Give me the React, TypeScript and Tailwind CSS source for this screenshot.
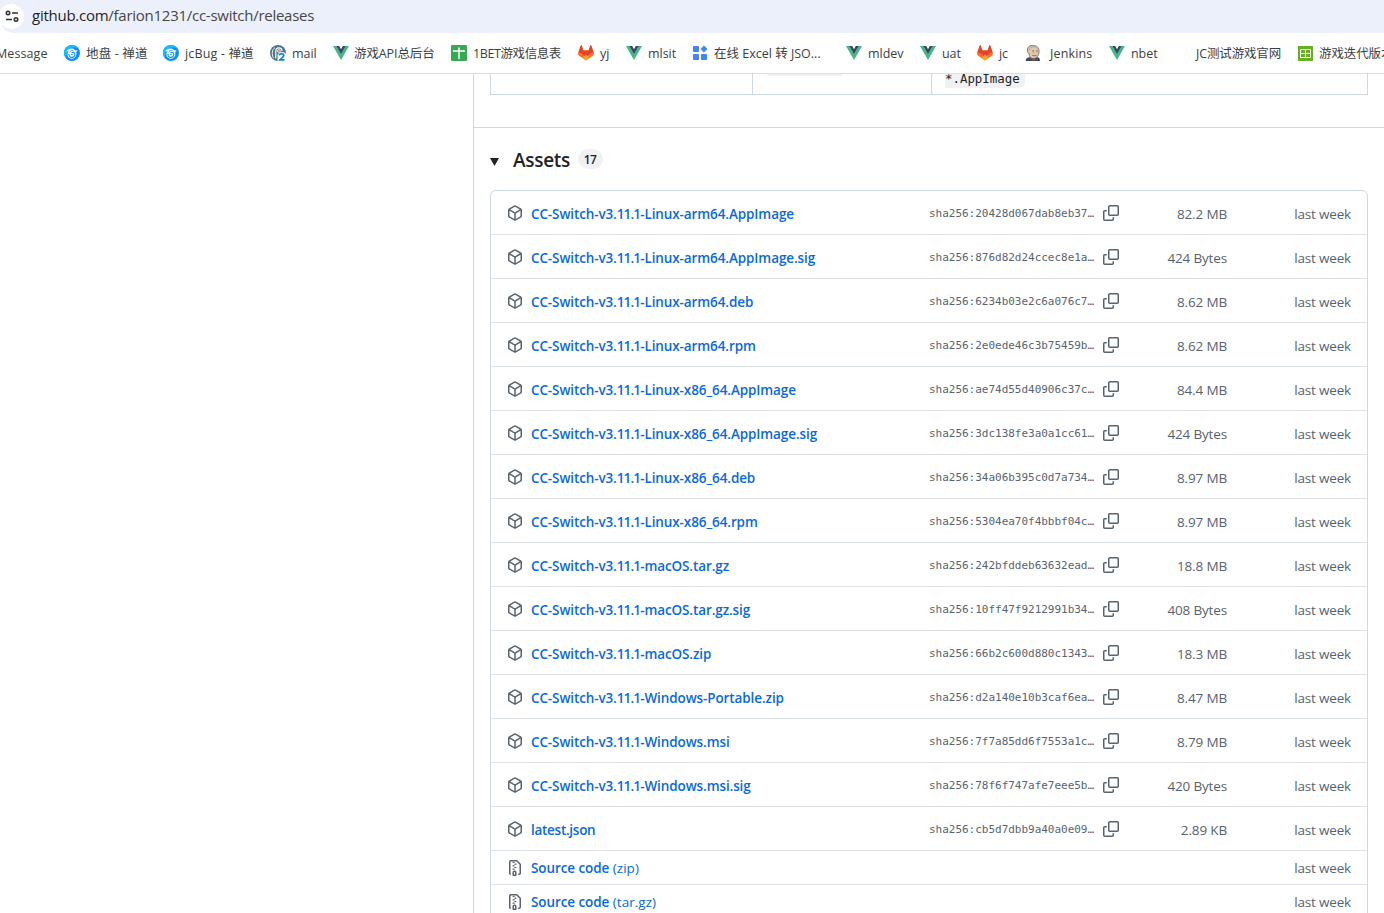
import React from "react";

const assets: [string, string, string][] = [
  ["Linux-arm64.AppImage", "sha256:20428d067dab8eb37…", "82.2 MB"],
  ["Linux-arm64.AppImage.sig", "sha256:876d82d24ccec8e1a…", "424 Bytes"],
  ["Linux-arm64.deb", "sha256:6234b03e2c6a076c7…", "8.62 MB"],
  ["Linux-arm64.rpm", "sha256:2e0ede46c3b75459b…", "8.62 MB"],
  ["Linux-x86_64.AppImage", "sha256:ae74d55d40906c37c…", "84.4 MB"],
  ["Linux-x86_64.AppImage.sig", "sha256:3dc138fe3a0a1cc61…", "424 Bytes"],
  ["Linux-x86_64.deb", "sha256:34a06b395c0d7a734…", "8.97 MB"],
  ["Linux-x86_64.rpm", "sha256:5304ea70f4bbbf04c…", "8.97 MB"],
  ["macOS.tar.gz", "sha256:242bfddeb63632ead…", "18.8 MB"],
  ["macOS.tar.gz.sig", "sha256:10ff47f9212991b34…", "408 Bytes"],
  ["macOS.zip", "sha256:66b2c600d880c1343…", "18.3 MB"],
  ["Windows-Portable.zip", "sha256:d2a140e10b3caf6ea…", "8.47 MB"],
  ["Windows.msi", "sha256:7f7a85dd6f7553a1c…", "8.79 MB"],
  ["Windows.msi.sig", "sha256:78f6f747afe7eee5b…", "420 Bytes"],
  ["latest.json", "sha256:cb5d7dbb9a40a0e09…", "2.89 KB"],
];

const PackageIcon = () => (
  <svg className="block size-4 shrink-0" viewBox="0 0 16 16" fill="#59636e">
    <path d="m8.878.392 5.25 3.045c.54.314.872.89.872 1.514v6.098a1.75 1.75 0 0 1-.872 1.514l-5.25 3.045a1.75 1.75 0 0 1-1.756 0l-5.25-3.045A1.75 1.75 0 0 1 1 11.049V4.951c0-.624.332-1.201.872-1.514L7.122.392a1.75 1.75 0 0 1 1.756 0ZM7.875 1.69l-4.63 2.685L8 7.133l4.755-2.758-4.63-2.685a.248.248 0 0 0-.25 0ZM2.5 5.677v5.372c0 .09.047.171.125.216l4.625 2.683V8.432Zm6.25 8.271 4.625-2.683a.25.25 0 0 0 .125-.216V5.677L8.75 8.432Z" />
  </svg>
);

const CopyIcon = () => (
  <svg className="block size-4 shrink-0" viewBox="0 0 16 16" fill="#59636e">
    <path d="M0 6.75C0 5.784.784 5 1.75 5h1.5a.75.75 0 0 1 0 1.5h-1.5a.25.25 0 0 0-.25.25v7.5c0 .138.112.25.25.25h7.5a.25.25 0 0 0 .25-.25v-1.5a.75.75 0 0 1 1.5 0v1.5A1.75 1.75 0 0 1 9.25 16h-7.5A1.75 1.75 0 0 1 0 14.25Z" />
    <path d="M5 1.75C5 .784 5.784 0 6.75 0h7.5C15.216 0 16 .784 16 1.75v7.5A1.75 1.75 0 0 1 14.25 11h-7.5A1.75 1.75 0 0 1 5 9.25Zm1.75-.25a.25.25 0 0 0-.25.25v7.5c0 .138.112.25.25.25h7.5a.25.25 0 0 0 .25-.25v-7.5a.25.25 0 0 0-.25-.25Z" />
  </svg>
);

const ZipIcon = () => (
  <svg className="block size-4 shrink-0" viewBox="0 0 16 16" fill="#59636e">
    <path d="M3.5 1.75v11.5c0 .09.048.173.126.217a.75.75 0 0 1-.752 1.298A1.748 1.748 0 0 1 2 13.25V1.75C2 .784 2.784 0 3.75 0h5.586c.464 0 .909.185 1.237.513l2.914 2.914c.329.328.513.773.513 1.237v8.586A1.75 1.75 0 0 1 12.25 15h-.5a.75.75 0 0 1 0-1.5h.5a.25.25 0 0 0 .25-.25V4.664a.25.25 0 0 0-.073-.177L9.513 1.573a.25.25 0 0 0-.177-.073H3.75a.25.25 0 0 0-.25.25Zm3.75 8.75h.5c.966 0 1.75.784 1.75 1.75v3a.75.75 0 0 1-.75.75h-2.5a.75.75 0 0 1-.75-.75v-3c0-.966.784-1.75 1.75-1.75ZM7 12.25v2.25h1v-2.25a.25.25 0 0 0-.25-.25h-.5a.25.25 0 0 0-.25.25Z" />
    <path d="M6 1.9h1.2a.55.55 0 0 1 0 1.1H6a.55.55 0 0 1 0-1.1ZM7.8 3.6H9a.55.55 0 0 1 0 1.1H7.8a.55.55 0 0 1 0-1.1ZM6 5.3h1.2a.55.55 0 0 1 0 1.1H6a.55.55 0 0 1 0-1.1ZM7.8 7H9a.55.55 0 0 1 0 1.1H7.8a.55.55 0 0 1 0-1.1ZM6 8.6h1.2a.55.55 0 0 1 0 1.1H6a.55.55 0 0 1 0-1.1Z" />
  </svg>
);

const VueIcon = () => (
  <svg className="block size-4" viewBox="0 0 16 16">
    <path d="M0 1h3.2L8 9.3 12.8 1H16L8 14.9Z" fill="#41b883" />
    <path d="M3.2 1h3L8 4.2 9.8 1h3L8 9.3Z" fill="#35495e" />
  </svg>
);

const SwirlIcon = () => (
  <svg className="block size-4" viewBox="0 0 16 16">
    <circle cx="8" cy="8" r="8" fill="#0a8ff8" />
    <path d="M0 8A8 8 0 0 1 14.9 4C11 1.4 4 2.4 3 7.6L1.8 13A8 8 0 0 1 0 8Z" fill="#12bffb" />
    <path d="M2.2 6.2C5 2.6 9.3 3 11.2 5.2L13.8 5.4C12.9 6 12.4 6.6 12.2 7.6 13 11 10.8 13.7 7.8 13.7 4.4 13.7 2.8 10.6 3.8 7.6L4.6 6.2Z" fill="white" />
    <path d="M5 9.4C4.9 11.2 6.2 12.4 7.8 12.4c2 0 3.3-1.6 3-3.4C10.5 7.6 9 7 7.9 7.7" fill="none" stroke="#0a8ff8" strokeWidth="1.1" strokeLinecap="round" />
    <path d="M5.3 7.4C6 5.8 8 5.2 9.6 5.8" fill="none" stroke="#0a9ff9" strokeWidth=".8" />
    <circle cx="7.9" cy="9.5" r=".8" fill="#0a8ff8" />
  </svg>
);

const MailIcon = () => (
  <svg className="block size-4" viewBox="0 0 16 16">
    <circle cx="8" cy="8" r="8" fill="#4c7587" />
    <path d="M3.6 13.2C1.4 9 2 4.4 5 2.6" fill="none" stroke="white" strokeWidth=".9" />
    <path d="M5.8 13.4V6C5.8 1.8 12 1.8 12 6" fill="none" stroke="white" strokeWidth="1.2" />
    <circle cx="8.9" cy="6" r="1.4" fill="none" stroke="white" strokeWidth=".9" />
    <path d="M7.6 9.4 10 7.2h4l2 1.6V16H7.6Z" fill="white" />
    <path d="M9.2 10.4c.4-2 4.6-1.9 4.6.2 0 1.4-2.5 2.4-3.8 4.2h4.6" fill="none" stroke="#1586c4" strokeWidth="1.7" />
  </svg>
);

const SheetIcon = () => (
  <svg className="block size-4" viewBox="0 0 16 16">
    <rect width="16" height="16" rx="1.2" fill="#35aa53" />
    <path d="M2 6h12M8 2.5V14" stroke="white" strokeWidth="1.5" />
  </svg>
);

const GitlabIcon = () => (
  <svg className="block size-4" viewBox="0 0 16 16">
    <path d="M8 15.6.9 10.4C.1 9.8-.1 8.9.2 8L2.7.7c.2-.5.8-.5 1 0L5.4 5.6h5.2L12.3.7c.2-.5.8-.5 1 0L15.8 8c.3.9.1 1.8-.7 2.4Z" fill="#fc6d26" />
    <path d="M.3 7.6 2.7.7c.2-.5.8-.5 1 0l1.7 4.9h5.2L12.3.7c.2-.5.8-.5 1 0l2.4 6.9c-1.7-.1-2.8.5-3.8 1.3L8 11.8 4.1 8.9C3.1 8.1 2 7.5.3 7.6Z" fill="#e24329" />
    <path d="m4.1 12.7 3.9-2.9 3.9 2.9L8 15.6Z" fill="#fca326" />
  </svg>
);

const AppsIcon = () => (
  <svg className="block size-4" viewBox="0 0 16 16" fill="#4285f4">
    <rect x="1" y="1" width="6" height="6" rx=".7" />
    <rect x="1" y="9" width="6" height="6" rx=".7" />
    <rect x="9" y="9" width="6" height="6" rx=".7" />
    <path d="m12 .5 3.5 3.5L12 7.5 8.5 4Z" />
  </svg>
);

const JenkinsIcon = () => (
  <svg className="block size-4" viewBox="0 0 16 16">
    <path d="M.5 16c.3-2.2 1.7-3.5 4-3.7L8 13l5-.7c1.3.6 2 1.8 2 3.7Z" fill="#335061" />
    <path d="M2.4 5.2C2.4 1.6 5 .4 8.2.4c4 0 6.2 2.7 5.8 6.6-.3 3.8-2.6 6.7-5.6 6.7-3 0-4.3-2.6-4.3-5.1-1.2-.2-1.8-1.7-1.7-3.4Z" fill="#e3c8ab" stroke="#514b47" strokeWidth=".7" />
    <path d="M2.8 5.2c1.2-.4 1.3-2 2.1-3.2C8 0 12.8.3 13.6 4.8 11.4 2.2 8.4 2 5.6 3.3L4.6 6Z" fill="#b8b6b0" />
    <path d="M7.5 5.8h1.4m2.3 0h1.3M7.8 7h.7m3 0h.6M7.3 10.3c1.4.6 2.8.6 4.2 0" stroke="#5b4d42" strokeWidth=".8" fill="none" />
    <path d="m6.7 13.2 2.2 1 2.4-1v2.6l-2.4-.8-2.2.8Z" fill="#d33833" />
  </svg>
);

const GridIcon = () => (
  <svg className="block size-4" viewBox="0 0 16 16">
    <rect x="0" y="1" width="15" height="15" fill="#66b120" />
    <path d="M2.5 4.5h10v8h-10ZM7.5 4.5v8M2.5 8.5h10" fill="none" stroke="white" strokeWidth="1" />
  </svg>
);

type Mark = { icon?: React.ReactNode; label: string; width: string; gap?: string; track?: string };
const marks: Mark[] = [
  { icon: <SwirlIcon />, label: "地盘 - 禅道", width: "w-[99px]", track: "tracking-[0.15px]" },
  { icon: <SwirlIcon />, label: "jcBug - 禅道", width: "w-[107px]", track: "tracking-[0.15px]" },
  { icon: <MailIcon />, label: "mail", width: "w-[63px]" },
  { icon: <VueIcon />, label: "游戏API总后台", width: "w-[118px]", gap: "gap-[5px]", track: "tracking-[-0.1px]" },
  { icon: <SheetIcon />, label: "1BET游戏信息表", width: "w-[127px]", track: "tracking-[-0.4px]" },
  { icon: <GitlabIcon />, label: "yj", width: "w-[48px]" },
  { icon: <VueIcon />, label: "mlsit", width: "w-[66px]" },
  { icon: <AppsIcon />, label: "在线 Excel 转 JSO...", width: "w-[154px]", track: "tracking-[0px]" },
  { icon: <VueIcon />, label: "mldev", width: "w-[74px]" },
  { icon: <VueIcon />, label: "uat", width: "w-[57px]" },
  { icon: <GitlabIcon />, label: "jc", width: "w-[48px]" },
  { icon: <JenkinsIcon />, label: "Jenkins", width: "w-[84px]", gap: "gap-[9px]", track: "tracking-[0.15px]" },
  { icon: <VueIcon />, label: "nbet", width: "w-[65px]" },
  { label: "JC测试游戏官网", width: "w-[124px]", track: "tracking-[-0.15px]" },
  { icon: <GridIcon />, label: "游戏迭代版本", width: "w-[110px]", gap: "gap-[5px]", track: "tracking-[-0.1px]" },
];

function Browser() {
  return (
    <header className="h-[74px] shrink-0 border-b border-[#dddfe1] bg-white">
      <div className="flex h-[33px] items-start rounded-bl-[14px] bg-[#ebf0fa]">
        <div className="ml-[-1px] flex h-8 w-[25px] items-center justify-center">
          <div className="flex size-[25px] shrink-0 items-center justify-center rounded-full bg-white">
            <svg className="block size-[14px]" viewBox="0 0 14 14" fill="none" stroke="#303134" strokeWidth="1.6">
              <circle cx="3" cy="4" r="1.7" />
              <path d="M7 4h6M1 10.5h6" />
              <circle cx="11" cy="10.5" r="1.7" />
            </svg>
          </div>
        </div>
        <div className="ml-2 mt-[5px] whitespace-nowrap text-[15px] leading-5 tracking-[-0.26px] text-[#474747]">
          <span className="text-[#1f1f1f]">github.com</span>/farion1231/cc-switch/releases
        </div>
      </div>
      <nav className="flex h-10 items-center whitespace-nowrap text-[12.5px] text-[#3c4043]">
        <div className="flex w-16 shrink-0">
          <span className="-ml-[4px] mt-[2px] tracking-[0.1px]">Message</span>
        </div>
        {marks.map((m, i) => (
          <div key={i} className={`flex shrink-0 items-center ${m.width} ${m.gap ?? "gap-[6px]"}`}>
            <div className="size-4 shrink-0">{m.icon}</div>
            <span className={`mt-[2px] ${m.track ?? "tracking-[-0.05px]"}`}>{m.label}</span>
          </div>
        ))}
      </nav>
    </header>
  );
}

export default function App() {
  return (
    <div className="flex h-[913px] w-[1384px] flex-col overflow-hidden bg-white font-['Open_Sans','Noto_Sans_CJK_SC',sans-serif] text-[#1f2328]">
      <Browser />
      <main className="ml-[473px] flex min-h-0 flex-1 flex-col overflow-hidden border-l border-[#d1d9e0]">
        <div className="flex h-[54px] shrink-0 items-start border-b border-[#d1d9e0] pl-4">
          <div className="flex h-[21px] w-[878px] border-x border-b border-[#d1d9e0]">
            <div className="w-[262px] border-r border-[#d1d9e0]" />
            <div className="w-[179px] border-r border-[#d1d9e0] pl-[14px]">
              <div className="h-0.5 w-[76px] rounded-b-md bg-[#eff1f3]" />
            </div>
            <div className="pl-[13px]">
              <div className="h-[14px] w-[80px] rounded-br-md bg-[#eff1f3] font-['DejaVu_Sans_Mono',monospace] text-[12.4px] leading-[9px] text-[#1f2328]">*.AppImage</div>
            </div>
          </div>
        </div>
        <div className="flex h-[62px] shrink-0 items-center pl-4 pt-[2px]">
          <svg className="mt-1 h-2 w-[9px]" viewBox="0 0 9 8"><path d="M0 0h9L4.5 8Z" fill="#1f2328" /></svg>
          <h2 className="ml-[14px] text-[19px] font-semibold leading-[30px] tracking-[-0.3px]">Assets</h2>
          <span className="-mt-[2px] ml-2 flex h-5 w-[25px] items-center justify-center rounded-full bg-[#eff1f3] pr-px pt-px text-xs font-semibold tracking-[-0.6px]">17</span>
        </div>
        <ul className="ml-4 w-[878px] shrink-0 rounded-t-md border border-[#d1d9e0] text-[13.5px] text-[#59636e]">
          {assets.map(([name, hash, size]) => (
            <li key={name} className="flex h-11 items-center border-b border-[#dce2e8] pl-4 pr-4">
              <PackageIcon />
              <a className="ml-2 mt-[3px] w-[398px] whitespace-nowrap font-semibold tracking-[-0.1px] text-[#0969da]">
                {name !== "latest.json" && (
                  <><span className="tracking-[-0.12px]">CC-Switch-v3.</span><span className="tracking-[-0.85px]">11.1</span>-</>
                )}
                <span className={name === "latest.json" ? "tracking-[-0.28px]" : ""}>{name}</span>
              </a>
              <span className="mt-[3px] w-[174px] whitespace-nowrap font-['DejaVu_Sans_Mono',monospace] text-[11px] tracking-[-0.02px]">{hash}</span>
              <CopyIcon />
              <span className="mt-[3px] w-[108px] whitespace-nowrap text-right tracking-[-0.15px]">{size}</span>
              <span className="mt-[3px] flex-1 whitespace-nowrap text-right tracking-[-0.18px]">last week</span>
            </li>
          ))}
          {["(zip)", "(tar.gz)"].map((kind) => (
            <li key={kind} className="flex h-[34px] items-center border-b border-[#dce2e8] pl-4 pr-4">
              <ZipIcon />
              <a className="ml-2 mt-[2px] whitespace-nowrap tracking-[-0.08px] text-[#0969da]"><span className="font-semibold">Source code</span> <span className="tracking-[0.05px]">{kind}</span></a>
              <span className="mt-[2px] flex-1 whitespace-nowrap text-right tracking-[-0.18px]">last week</span>
            </li>
          ))}
        </ul>
      </main>
    </div>
  );
}
